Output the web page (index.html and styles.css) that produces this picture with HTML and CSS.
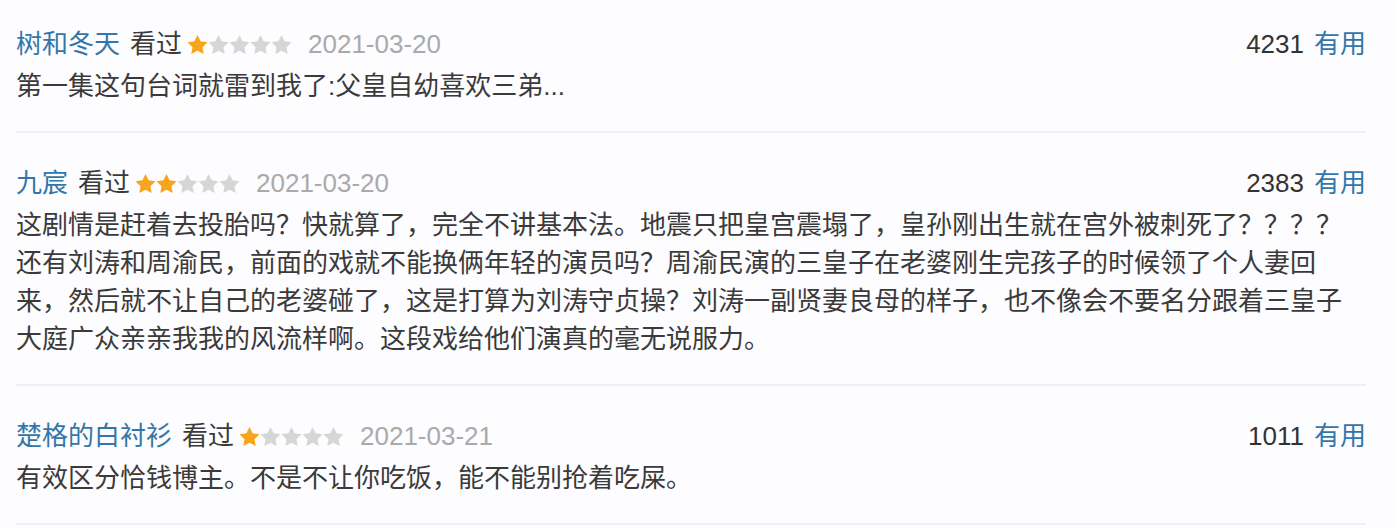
FILE: index.html
```html
<!DOCTYPE html>
<html lang="zh-CN">
<head>
    <meta charset="UTF-8">
    <meta name="viewport" content="width=device-width, initial-scale=1.0">
    <title>短评</title>
    <link rel="stylesheet" href="styles.css">
</head>
<body>

    <svg class="defs" width="0" height="0">
        <symbol id="star" viewBox="0 0 20 20">
            <polygon points="10,0 12.94,5.95 19.51,6.91 14.76,11.55 15.88,18.09 10,15 4.12,18.09 5.24,11.55 0.49,6.91 7.06,5.95"/>
        </symbol>
    </svg>

    <div class="comment-list">

        <div class="comment-item">
            <div class="comment-info">
                <div class="info-left">
                    <a class="user" href="#">树和冬天</a>
                    <span class="seen">看过</span>
                    <span class="stars">
                        <svg class="on"><use href="#star"/></svg><svg><use href="#star"/></svg><svg><use href="#star"/></svg><svg><use href="#star"/></svg><svg><use href="#star"/></svg>
                    </span>
                    <span class="date">2021-03-20</span>
                </div>
                <div class="votes">
                    <span class="count">4231</span>
                    <a class="useful" href="#">有用</a>
                </div>
            </div>
            <p class="comment-text">第一集这句台词就雷到我了:父皇自幼喜欢三弟...</p>
        </div>

        <div class="comment-item">
            <div class="comment-info">
                <div class="info-left">
                    <a class="user" href="#">九宸</a>
                    <span class="seen">看过</span>
                    <span class="stars">
                        <svg class="on"><use href="#star"/></svg><svg class="on"><use href="#star"/></svg><svg><use href="#star"/></svg><svg><use href="#star"/></svg><svg><use href="#star"/></svg>
                    </span>
                    <span class="date">2021-03-20</span>
                </div>
                <div class="votes">
                    <span class="count">2383</span>
                    <a class="useful" href="#">有用</a>
                </div>
            </div>
            <p class="comment-text">这剧情是赶着去投胎吗？快就算了，完全不讲基本法。地震只把皇宫震塌了，皇孙刚出生就在宫外被刺死了？？？？还有刘涛和周渝民，前面的戏就不能换俩年轻的演员吗？周渝民演的三皇子在老婆刚生完孩子的时候领了个人妻回来，然后就不让自己的老婆碰了，这是打算为刘涛守贞操？刘涛一副贤妻良母的样子，也不像会不要名分跟着三皇子大庭广众亲亲我我的风流样啊。这段戏给他们演真的毫无说服力。</p>
        </div>

        <div class="comment-item">
            <div class="comment-info">
                <div class="info-left">
                    <a class="user" href="#">楚格的白衬衫</a>
                    <span class="seen">看过</span>
                    <span class="stars">
                        <svg class="on"><use href="#star"/></svg><svg><use href="#star"/></svg><svg><use href="#star"/></svg><svg><use href="#star"/></svg><svg><use href="#star"/></svg>
                    </span>
                    <span class="date">2021-03-21</span>
                </div>
                <div class="votes">
                    <span class="count">1011</span>
                    <a class="useful" href="#">有用</a>
                </div>
            </div>
            <p class="comment-text">有效区分恰钱博主。不是不让你吃饭，能不能别抢着吃屎。</p>
        </div>

    </div>

</body>
</html>
```

FILE: styles.css
```css
body {
    margin: 0;
    background-color: #fdfcfe;
    font-family: "Liberation Sans", "Noto Sans CJK SC", sans-serif;
    font-size: 26px;
    color: #333;
    overflow: hidden;
}

.defs {
    position: absolute;
}

.comment-list {
    width: 1350px;
    margin-top: -6px;
    padding-left: 16px;
}

.comment-item {
    padding: 31px 0 26px;
    border-bottom: 2px solid #efeef1;
}

.comment-info {
    display: flex;
    justify-content: space-between;
    align-items: center;
    height: 38px;
    line-height: 38px;
}

.info-left {
    display: flex;
    align-items: center;
}

.user,
.useful {
    color: #3377aa;
    text-decoration: none;
}

.user {
    margin-right: 10px;
}

.seen {
    color: #3a3a3a;
    margin-right: 5px;
}

.stars {
    display: flex;
    gap: 0;
    margin-top: 3px;
    margin-right: 16px;
}

.stars svg {
    width: 21px;
    height: 21px;
    fill: #d6d6d6;
}

.stars svg.on {
    fill: #f7a51c;
}

.date {
    color: #aaa;
}

.votes {
    display: flex;
    align-items: center;
}

.count {
    color: #333;
    margin-right: 10px;
}

.comment-text {
    margin: 4px 0 0;
    line-height: 38px;
    color: #3a3a3a;
}
```
